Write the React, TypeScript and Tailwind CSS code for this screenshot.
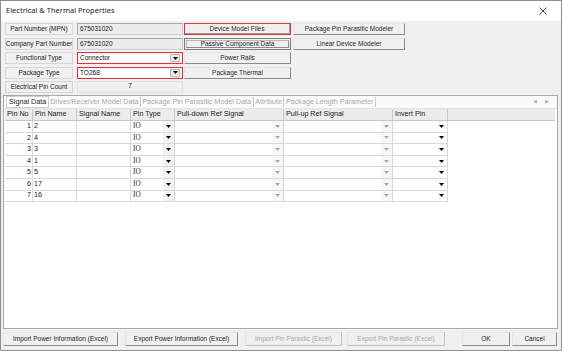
import React from "react";

const Tri = ({ color = "#000" }: { color?: string }) => (
  <svg width="5" height="3" viewBox="0 0 5 3">
    <polygon points="0,0 5,0 2.5,3" fill={color} />
  </svg>
);

const btn =
  "h-[12px] flex items-center justify-center text-[6.5px] text-[#1e1e1e] bg-[#f0f0f0] border border-t-[#e6e6e6] border-l-[#e6e6e6] border-r-[#8a8a8a] border-b-[#8a8a8a] whitespace-nowrap";

const labelBox =
  "h-[12px] flex items-center justify-center text-[6.5px] text-[#222] bg-[#f0f0f0] border border-[#d6d6d6] whitespace-nowrap";

export default function App() {
  const rows = [
    ["1", "2"],
    ["2", "4"],
    ["3", "3"],
    ["4", "1"],
    ["5", "5"],
    ["6", "17"],
    ["7", "16"],
  ];
  const cellB = "border-r border-b border-[#d9d9d9] h-full flex items-center";
  return (
    <div className="w-[562px] h-[351px] overflow-hidden bg-[#f0f0f0] border border-[#8f8f8f] flex flex-col font-['Liberation_Sans',Arial,sans-serif]">
      {/* title bar */}
      <div className="h-[20px] shrink-0 bg-white flex items-center justify-between pl-[5px] pr-[14px]">
        <span className="text-[7.5px] text-[#222] font-['Noto_Sans',sans-serif]">
          Electrical &amp; Thermal Properties
        </span>
        <svg width="8" height="8" viewBox="0 0 8 8">
          <path d="M0.5 0.5 L7.5 7.5 M7.5 0.5 L0.5 7.5" stroke="#333" strokeWidth="0.9" />
        </svg>
      </div>

      {/* top section */}
      <div className="flex pt-[2px] pl-[4px]">
        <div className="w-[68px] flex flex-col gap-[2.5px]">
          <div className={labelBox}>Part Number (MPN)</div>
          <div className={labelBox}>Company Part Number</div>
          <div className={labelBox}>Functional Type</div>
          <div className={labelBox}>Package Type</div>
          <div className={labelBox}>Electrical Pin Count</div>
        </div>
        <div className="w-[106px] ml-[4px] flex flex-col gap-[2.5px]">
          <div className="h-[12px] flex items-center pl-[2px] text-[6.5px] text-[#222] bg-[#ececec] border border-[#cfcfcf] border-t-[#a8a8a8] border-l-[#a8a8a8]">
            675031020
          </div>
          <div className="h-[12px] flex items-center pl-[2px] text-[6.5px] text-[#222] bg-[#ececec] border border-[#cfcfcf] border-t-[#a8a8a8] border-l-[#a8a8a8]">
            675031020
          </div>
          <div className="h-[12px] border border-[#e0343c] p-[1px] flex">
            <div className="flex-1 bg-white flex items-center justify-between pl-[1px] pr-[1px] text-[6.5px] text-[#111]">
              <span>Connector</span>
              <div className="w-[10px] h-[8px] bg-[#e9e9e9] border border-[#bdbdbd] flex items-center justify-center">
                <Tri />
              </div>
            </div>
          </div>
          <div className="h-[12px] border border-[#e0343c] p-[1px] flex">
            <div className="flex-1 bg-white flex items-center justify-between pl-[1px] pr-[1px] text-[6.5px] text-[#111]">
              <span>TO268</span>
              <div className="w-[10px] h-[8px] bg-[#e9e9e9] border border-[#bdbdbd] flex items-center justify-center">
                <Tri />
              </div>
            </div>
          </div>
          <div className="h-[12px] flex justify-center items-start text-[6.5px] text-[#222] bg-[#f0f0f0] border border-[#e0e0e0] leading-[8px]">
            7
          </div>
        </div>
        <div className="w-[107px] ml-[1px] flex flex-col gap-[2.5px]">
          <div className="h-[12px] border border-[#e0343c] flex">
            <div className="flex-1 flex items-center justify-center text-[6.5px] text-[#1e1e1e] bg-[#f0f0f0] border-r border-b border-[#9a9a9a]">
              Device Model Files
            </div>
          </div>
          <div className="h-[12px] flex bg-[#f0f0f0] border border-[#7a7a7a] p-[1px]">
            <div className="flex-1 flex items-center justify-center text-[6.5px] text-[#1e1e1e] border border-[#b8b8b8] border-r-[#8a8a8a] border-b-[#8a8a8a]">
              Passive Component Data
            </div>
          </div>
          <div className={btn}>Power Rails</div>
          <div className={btn}>Package Thermal</div>
        </div>
        <div className="w-[112px] ml-[2px] flex flex-col gap-[2.5px]">
          <div className={btn}>Package Pin Parasitic Modeler</div>
          <div className={btn}>Linear Device Modeler</div>
        </div>
      </div>

      {/* tab panel */}
      <div className="mt-[2px] ml-[2px] w-[555px] h-[234px] shrink-0 border border-[#a8a8a8] bg-white flex flex-col">
        <div className="h-[13px] flex items-center pl-[2px] pr-[8px] text-[7.2px] bg-[#fafafa] border-b border-[#e2e2e2]">
          <div className="h-[12px] px-[2px] flex items-center bg-white border border-[#d0d0d0] text-[#1a1a1a]">
            Signal Data
          </div>
          <span className="text-[#ababab] pl-[1px]">Driver/Receiver Model Data</span>
          <span className="w-px h-[10px] bg-[#c8c8c8] mx-[1.5px]" />
          <span className="text-[#ababab]">Package Pin Parasitic Model Data</span>
          <span className="w-px h-[10px] bg-[#c8c8c8] mx-[1.5px]" />
          <span className="text-[#ababab]">Attribute</span>
          <span className="w-px h-[10px] bg-[#c8c8c8] mx-[1.5px]" />
          <span className="text-[#ababab]">Package Length Parameter</span>
          <span className="w-px h-[10px] bg-[#c8c8c8] mx-[1.5px]" />
          <span className="ml-auto flex gap-[8px] text-[#b0b0b0] text-[5px]">
            <span>◀</span>
            <span>▶</span>
          </span>
        </div>
        <div className="ml-[1px] w-[550px] flex flex-col text-[7.2px] text-[#1a1a1a]">
          <div className="h-[12px] flex bg-[#ececec] border-b border-[#c8c8c8]">
            <div className="w-[28px] border-r border-[#c8c8c8] flex items-center pl-[2px]">Pin No</div>
            <div className="w-[44px] border-r border-[#c8c8c8] flex items-center pl-[2px]">Pin Name</div>
            <div className="w-[54px] border-r border-[#c8c8c8] flex items-center pl-[2px]">Signal Name</div>
            <div className="w-[44px] border-r border-[#c8c8c8] flex items-center pl-[2px]">Pin Type</div>
            <div className="w-[109px] border-r border-[#c8c8c8] flex items-center pl-[2px]">Pull-down Ref Signal</div>
            <div className="w-[109px] border-r border-[#c8c8c8] flex items-center pl-[2px]">Pull-up Ref Signal</div>
            <div className="w-[55px] border-r border-[#c8c8c8] flex items-center pl-[2px]">Invert Pin</div>
          </div>
          {rows.map(([n, name]) => (
            <div key={n} className="h-[11.6px] flex">
              <div className={`w-[28px] ${cellB} justify-end pr-[1px]`}>{n}</div>
              <div className={`w-[44px] ${cellB} pl-[1px]`}>{name}</div>
              <div className={`w-[54px] ${cellB}`} />
              <div className={`w-[44px] ${cellB} justify-between pl-[2px]`}>
                <span className="font-['Liberation_Serif',serif]">IO</span>
                <div className="w-[11px] h-full bg-[#f3f3f3] flex items-center justify-center">
                  <Tri />
                </div>
              </div>
              <div className={`w-[109px] ${cellB} justify-end`}>
                <div className="w-[11px] h-full bg-[#f7f7f7] flex items-center justify-center">
                  <Tri color="#a8a8a8" />
                </div>
              </div>
              <div className={`w-[109px] ${cellB} justify-end`}>
                <div className="w-[11px] h-full bg-[#f7f7f7] flex items-center justify-center">
                  <Tri color="#a8a8a8" />
                </div>
              </div>
              <div className={`w-[55px] ${cellB} justify-end`}>
                <div className="w-[11px] h-full bg-white flex items-center justify-center">
                  <Tri />
                </div>
              </div>
            </div>
          ))}
        </div>
      </div>

      {/* bottom buttons */}
      <div className="mt-[3px] ml-[2px] flex">
        <div className={`${btn} h-[14px] w-[115px]`}>Import Power Information (Excel)</div>
        <div className={`${btn} h-[14px] w-[113px] ml-[7px]`}>Export Power Information (Excel)</div>
        <div className={`${btn} h-[14px] w-[97px] ml-[7px] text-[#a6a6a6] border-r-[#c0c0c0] border-b-[#c0c0c0]`}>
          Import Pin Parastic (Excel)
        </div>
        <div className={`${btn} h-[14px] w-[98px] ml-[5px] text-[#a6a6a6] border-r-[#c0c0c0] border-b-[#c0c0c0]`}>
          Export Pin Parastic (Excel)
        </div>
        <div className={`${btn} h-[14px] w-[48px] ml-[17px]`}>OK</div>
        <div className={`${btn} h-[14px] w-[45px] ml-[2px]`}>Cancel</div>
      </div>
    </div>
  );
}
